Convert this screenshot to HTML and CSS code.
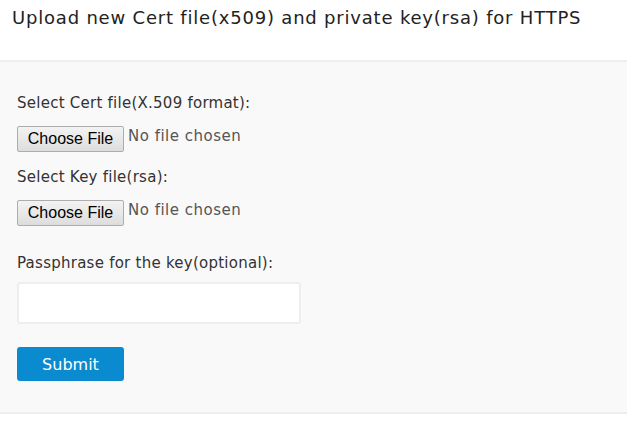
FILE: index.html
```html
<!DOCTYPE html>
<html>
<head>
<meta charset="utf-8">
<link rel="stylesheet" href="styles.css">
</head>
<body>
<div class="header">
  <h1 class="title">Upload new Cert file(x509) and private key(rsa) for HTTPS</h1>
</div>
<form class="panel">
  <label class="label">Select Cert file(X.509 format):</label>
  <div class="file-row">
    <input class="file" type="file">
  </div>
  <label class="label">Select Key file(rsa):</label>
  <div class="file-row">
    <input class="file" type="file">
  </div>
  <label class="label label-pass">Passphrase for the key(optional):</label>
  <input class="text" type="password">
  <button class="submit" type="button">Submit</button>
</form>
</body>
</html>
```
FILE: styles.css
```css
html, body {
  margin: 0;
  padding: 0;
  background: #fff;
}
.header {
  height: 60px;
  border-bottom: 2px solid #eeeeee;
  box-sizing: content-box;
}
.title {
  margin: 0;
  padding: 6px 0 0 12px;
  font-family: "DejaVu Sans", sans-serif;
  font-weight: 400;
  font-size: 18px;
  letter-spacing: 0.8px;
  line-height: 24px;
  color: #222;
}
.panel {
  background: #f9f9f9;
  border-bottom: 2px solid #eeeeee;
  height: 352px;
  box-sizing: border-box;
  padding: 30px 17px 0;
  display: flex;
  flex-direction: column;
  align-items: flex-start;
}
.label {
  font-family: "DejaVu Sans", sans-serif;
  font-size: 15px;
  letter-spacing: 0.25px;
  line-height: 22px;
  color: #333;
}
.file-row {
  margin-top: 12px;
  margin-bottom: 14px;
  height: 26px;
}
.file {
  font-family: "DejaVu Sans", sans-serif;
  font-size: 15px;
  letter-spacing: 0.5px;
  color: #555;
  height: 26px;
  line-height: 20px;
}
.file::file-selector-button {
  font-family: "Liberation Sans", Arial, sans-serif;
  font-size: 16px;
  letter-spacing: 0;
  color: #000;
  width: 107px;
  height: 26px;
  margin: 0 4px 0 0;
  padding: 0;
  border: 1px solid #adadad;
  border-radius: 2px;
  background: linear-gradient(#f3f3f3, #dddddd);
  vertical-align: top;
}
.label-pass {
  margin-top: 12px;
}
.text {
  margin-top: 8px;
  width: 284px;
  height: 42px;
  box-sizing: border-box;
  border: 2px solid #eeeeee;
  border-radius: 3px;
  background: #fff;
  outline: none;
}
.submit {
  margin-top: 23px;
  width: 107px;
  height: 34px;
  border: 0;
  border-radius: 3px;
  background: #0a8bd0;
  color: #fff;
  font-family: "DejaVu Sans", sans-serif;
  font-size: 16px;
  font-weight: 400;
  padding: 0;
}
```
